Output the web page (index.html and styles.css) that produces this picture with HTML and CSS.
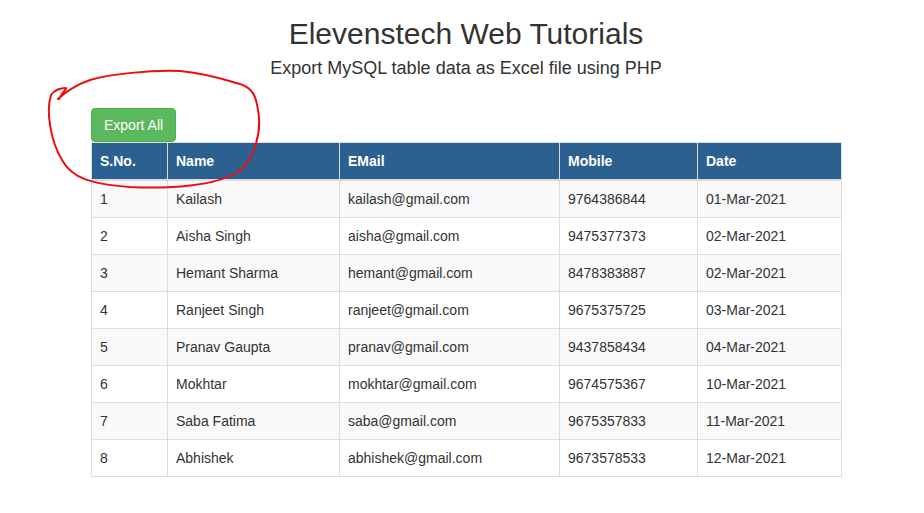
FILE: index.html
```html
<!DOCTYPE html>
<html>
<head>
<meta charset="utf-8">
<title>Elevenstech Web Tutorials</title>
<link rel="stylesheet" href="styles.css">
</head>
<body>
<div class="container">
  <header class="page-header">
    <h1 class="title">Elevenstech Web Tutorials</h1>
    <h4 class="subtitle">Export MySQL table data as Excel file using PHP</h4>
  </header>
  <div class="toolbar">
    <button class="btn btn-success" type="button">Export All</button>
  </div>
  <table class="data-table">
    <colgroup>
      <col class="c-sno"><col class="c-name"><col class="c-email"><col class="c-mobile"><col class="c-date">
    </colgroup>
    <thead>
      <tr><th>S.No.</th><th>Name</th><th>EMail</th><th>Mobile</th><th>Date</th></tr>
    </thead>
    <tbody>
      <tr><td>1</td><td>Kailash</td><td>kailash@gmail.com</td><td>9764386844</td><td>01-Mar-2021</td></tr>
      <tr><td>2</td><td>Aisha Singh</td><td>aisha@gmail.com</td><td>9475377373</td><td>02-Mar-2021</td></tr>
      <tr><td>3</td><td>Hemant Sharma</td><td>hemant@gmail.com</td><td>8478383887</td><td>02-Mar-2021</td></tr>
      <tr><td>4</td><td>Ranjeet Singh</td><td>ranjeet@gmail.com</td><td>9675375725</td><td>03-Mar-2021</td></tr>
      <tr><td>5</td><td>Pranav Gaupta</td><td>pranav@gmail.com</td><td>9437858434</td><td>04-Mar-2021</td></tr>
      <tr><td>6</td><td>Mokhtar</td><td>mokhtar@gmail.com</td><td>9674575367</td><td>10-Mar-2021</td></tr>
      <tr><td>7</td><td>Saba Fatima</td><td>saba@gmail.com</td><td>9675357833</td><td>11-Mar-2021</td></tr>
      <tr><td>8</td><td>Abhishek</td><td>abhishek@gmail.com</td><td>9673578533</td><td>12-Mar-2021</td></tr>
    </tbody>
  </table>
</div>
<svg class="annotation" width="924" height="513" viewBox="0 0 924 513" xmlns="http://www.w3.org/2000/svg">
  <path d="M59,99 Q62,93 66,89 M66,88 Q56,88 51,95 C46,110 50,140 62,160 C72,178 90,184 130,187 C170,189 215,186 238,172 C255,160 262,130 258,110 C256,95 252,88 240,84 C225,80 210,74 180,71 C150,70 110,74 90,80 C78,84 65,92 58,99" fill="none" stroke="#e81010" stroke-width="2" stroke-linecap="round" stroke-linejoin="round"/>
</svg>
</body>
</html>
```
FILE: styles.css
```css
html, body {
  margin: 0;
  padding: 0;
  background: #fff;
}
body {
  font-family: "Liberation Sans", Arial, sans-serif;
  font-size: 14px;
  line-height: 1.42857;
  color: #333;
  position: relative;
}
.container {
  width: 750px;
  margin-left: 91px;
}
.page-header {
  text-align: center;
  padding-top: 17px;
}
.title {
  margin: 0 0 8px;
  font-size: 30px;
  font-weight: 400;
  line-height: 33px;
}
.subtitle {
  margin: 0 0 30px;
  font-size: 18px;
  font-weight: 400;
  line-height: 20px;
}
.toolbar {
  display: flex;
}
.btn {
  font-family: inherit;
  font-size: 14px;
  line-height: 20px;
  padding: 6px 12px;
  border: 1px solid transparent;
  border-radius: 4px;
  cursor: pointer;
}
.btn-success {
  color: #fff;
  background: #5cb85c;
  border-color: #4cae4c;
}
.data-table {
  width: 750px;
  border-collapse: collapse;
  border: 1px solid #ddd;
  table-layout: fixed;
}
.c-sno { width: 76px; }
.c-name { width: 172px; }
.c-email { width: 220px; }
.c-mobile { width: 138px; }
.c-date { width: 144px; }
.data-table th,
.data-table td {
  padding: 8px;
  border: 1px solid #ddd;
  text-align: left;
  vertical-align: top;
  line-height: 20px;
}
.data-table th {
  background: #2b6090;
  color: #fff;
  font-weight: 700;
  border-bottom: 2px solid #ddd;
}
.data-table tbody tr:nth-child(odd) {
  background: #f9f9f9;
}
.annotation {
  position: absolute;
  left: 0;
  top: 0;
  pointer-events: none;
}
```
